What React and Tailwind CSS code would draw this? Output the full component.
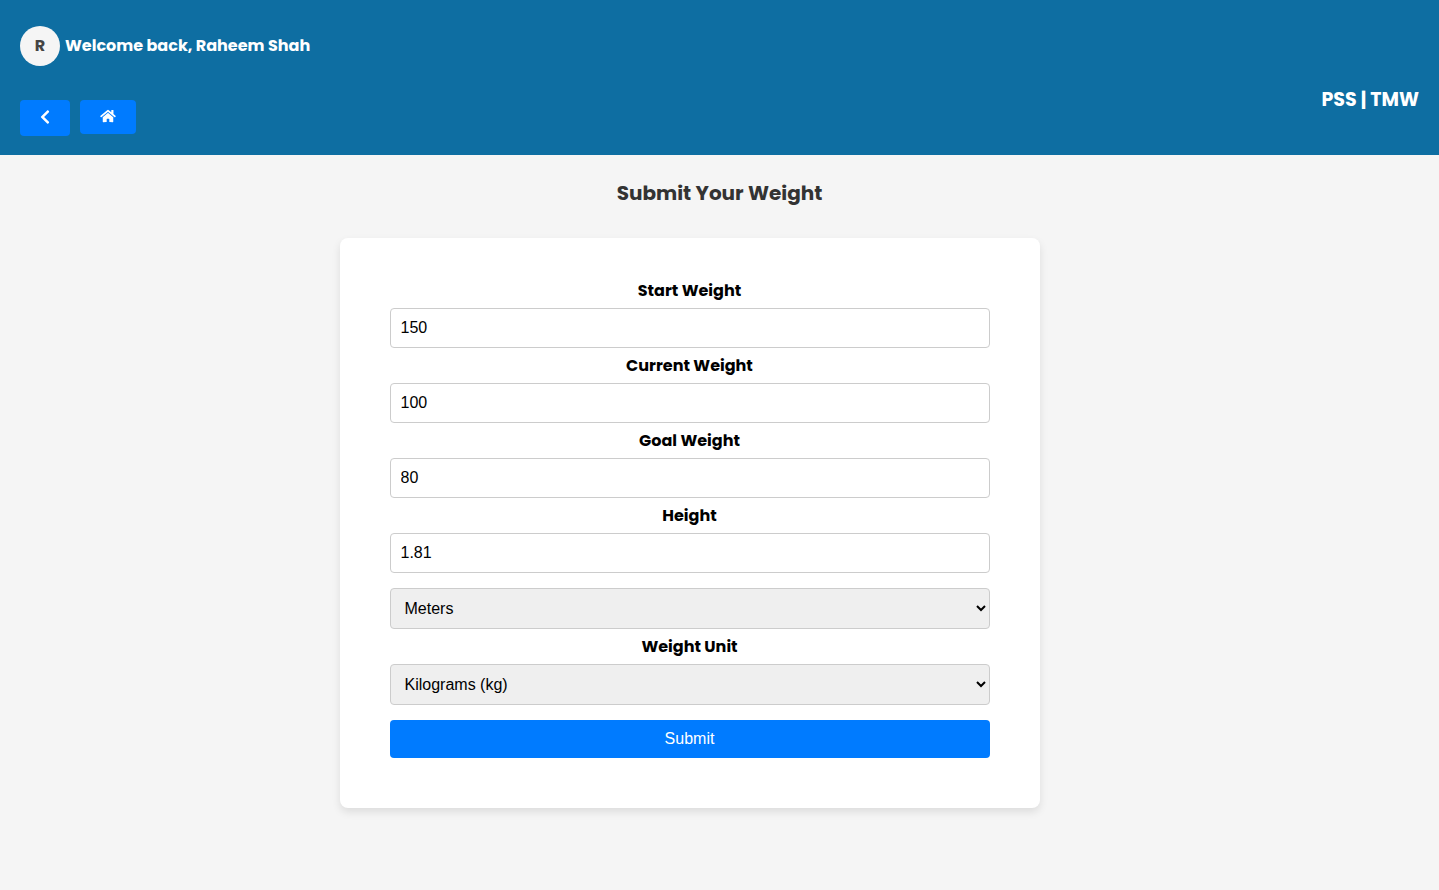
import React, { useState } from "react";
import { FaChevronLeft, FaHome } from "react-icons/fa";

const weightFields = [
  { name: "startWeight", label: "Start Weight" },
  { name: "currentWeight", label: "Current Weight" },
  { name: "goalWeight", label: "Goal Weight" },
  { name: "height", label: "Height" },
];

const labelClass = "block mb-[5px] text-base font-bold text-center text-black";

const selectClass =
  "w-full h-[41px] px-[10px] border border-[#ccc] rounded bg-[#efefef] text-base text-black font-['Liberation_Sans',Arial,sans-serif]";

const navButtonClass =
  "px-5 pt-[9px] pb-[11px] rounded bg-[#007bff] hover:bg-[#0056b3]";

const Header = ({ user }) => (
  <header className="flex items-center justify-between h-[155px] px-5 bg-[#0e6ea2] text-white">
    <div className="flex flex-col gap-[34px] pt-[6px]">
      <div className="flex items-center gap-[5px]">
        <span className="flex items-center justify-center w-10 h-10 rounded-full bg-[#f5f5f5] text-[#444] font-bold">
          {user.charAt(0)}
        </span>
        <span className="text-base font-bold">Welcome back, {user}</span>
      </div>
      <nav className="flex items-start gap-[10px]">
        <button type="button" aria-label="Back" className={navButtonClass}>
          <FaChevronLeft className="w-[10px] h-4" />
        </button>
        <button type="button" aria-label="Home" className={navButtonClass}>
          <FaHome className="w-4 h-[14px]" />
        </button>
      </nav>
    </div>
    <p className="pt-11 text-[19px] leading-7 font-bold">PSS | TMW</p>
  </header>
);

const App = () => {
  const [form, setForm] = useState({
    startWeight: "150",
    currentWeight: "100",
    goalWeight: "80",
    height: "1.81",
    heightUnit: "m",
    weightUnit: "kg",
  });

  const handleChange = (e) => {
    setForm({ ...form, [e.target.name]: e.target.value });
  };

  const handleSubmit = (e) => {
    e.preventDefault();
    console.log(form);
  };

  return (
    <div className="min-h-screen bg-[#f5f5f5] font-[Poppins,Inter,sans-serif]">
      <Header user="Raheem Shah" />
      <main className="pt-[23px] pb-10">
        <h1 className="text-xl leading-[30px] font-bold text-center text-[#333]">
          Submit Your Weight
        </h1>
        <div className="mt-[30px] pr-[60px]">
          <form
            onSubmit={handleSubmit}
            className="max-w-[700px] mx-auto px-[50px] pt-[41px] pb-[50px] bg-white rounded-lg shadow-[0_4px_8px_rgba(0,0,0,0.1)]"
          >
            {weightFields.map((field) => (
              <div key={field.name} className="mb-[6px]">
                <label htmlFor={field.name} className={labelClass}>
                  {field.label}
                </label>
                <input
                  id={field.name}
                  name={field.name}
                  type="text"
                  value={form[field.name]}
                  onChange={handleChange}
                  className="block w-full h-10 px-[10px] border border-[#ccc] rounded bg-white text-base text-black font-['Liberation_Sans',Arial,sans-serif]"
                />
              </div>
            ))}
            <select
              name="heightUnit"
              aria-label="Height unit"
              value={form.heightUnit}
              onChange={handleChange}
              className={`block mt-[15px] mb-[6px] ${selectClass}`}
            >
              <option value="m">Meters</option>
              <option value="ft">Feet</option>
            </select>
            <label htmlFor="weightUnit" className={labelClass}>
              Weight Unit
            </label>
            <select
              id="weightUnit"
              name="weightUnit"
              value={form.weightUnit}
              onChange={handleChange}
              className={`block mb-[15px] ${selectClass}`}
            >
              <option value="kg">Kilograms (kg)</option>
              <option value="lbs">Pounds (lbs)</option>
            </select>
            <button
              type="submit"
              className="block w-full h-[38px] rounded bg-[#007bff] hover:bg-[#0056b3] text-base text-white font-['Liberation_Sans',Arial,sans-serif]"
            >
              Submit
            </button>
          </form>
        </div>
      </main>
    </div>
  );
};

export default App;
